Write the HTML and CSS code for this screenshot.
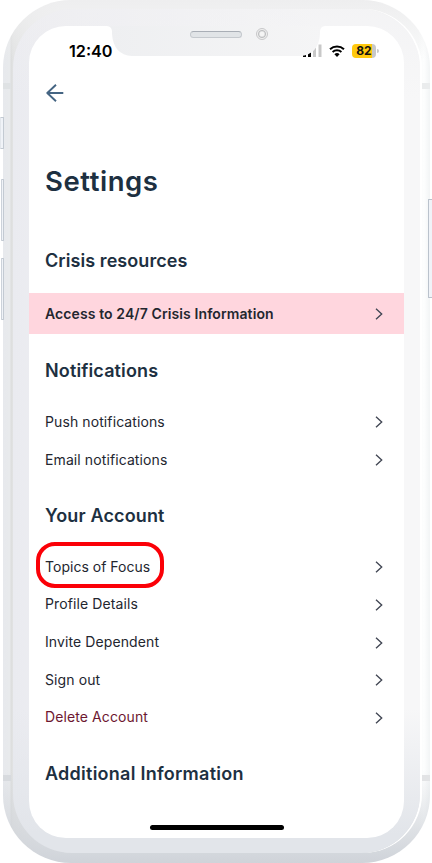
FILE: index.html
```html
<!DOCTYPE html>
<html lang="en">
<head>
    <meta charset="UTF-8">
    <title>Settings</title>
    <link rel="stylesheet" href="styles.css">
</head>
<body>
<svg class="defs">
    <linearGradient id="notchFill">
        <stop offset="0" stop-color="#eeeff1"/>
        <stop offset="1" stop-color="#f5f5f6"/>
    </linearGradient>
    <symbol id="chevron" viewBox="0 0 8 12">
        <path d="M1 .8 6.7 6 1 11.2" fill="none" stroke="#414653" stroke-width="1.35"/>
    </symbol>
</svg>
<div class="phone">
    <i class="key key-mute"></i>
    <i class="key key-up"></i>
    <i class="key key-down"></i>
    <i class="key key-power"></i>
    <i class="band band-tl"></i>
    <i class="band band-tr"></i>
    <i class="band band-bl"></i>
    <i class="band band-br"></i>
    <div class="bezel">
        <div class="screen">
            <div class="status">
                <span class="time">12:40</span>
                <div class="status-icons">
                    <svg width="19" height="13" viewBox="0 0 19 13">
                        <path d="M0 9h3v4H0zM5 7h3v6H5z" fill="#000"/>
                        <path d="M10 3.5h3V13h-3zM15.5.5h3V13h-3z" fill="#c8c8c8"/>
                    </svg>
                    <svg class="wifi" width="16" height="12" viewBox="0 0 16 12">
                        <path d="M1 4.2a10.3 10.3 0 0 1 14 0M3.6 7a6.5 6.5 0 0 1 8.8 0" fill="none" stroke="#000" stroke-width="2"/>
                        <path d="M8 12 5.4 9.3a3.8 3.8 0 0 1 5.2 0z" fill="#000"/>
                    </svg>
                    <span class="battery">82</span>
                    <i class="battery-tip"></i>
                </div>
            </div>
            <div class="back">
                <svg width="18" height="18" viewBox="0 0 18 18">
                    <path d="M17.3 9H1.4M10 .8 1.3 9l8.7 8.2" fill="none" stroke="#456583" stroke-width="1.9" stroke-linejoin="round"/>
                </svg>
            </div>
            <h1>Settings</h1>
            <h2 class="t-crisis">Crisis resources</h2>
            <div class="row crisis"><span>Access to 24/7 Crisis Information</span><svg class="chev"><use href="#chevron"/></svg></div>
            <h2>Notifications</h2>
            <div class="list">
                <div class="row"><span>Push notifications</span><svg class="chev"><use href="#chevron"/></svg></div>
                <div class="row"><span>Email notifications</span><svg class="chev"><use href="#chevron"/></svg></div>
            </div>
            <h2>Your Account</h2>
            <div class="list">
                <div class="row topics"><span>Topics of Focus</span><svg class="chev"><use href="#chevron"/></svg><i class="mark"></i></div>
                <div class="row"><span>Profile Details</span><svg class="chev"><use href="#chevron"/></svg></div>
                <div class="row"><span>Invite Dependent</span><svg class="chev"><use href="#chevron"/></svg></div>
                <div class="row"><span>Sign out</span><svg class="chev"><use href="#chevron"/></svg></div>
                <div class="row delete"><span>Delete Account</span><svg class="chev"><use href="#chevron"/></svg></div>
            </div>
            <h2 class="t-info">Additional Information</h2>
            <svg class="notch" width="218" height="30" viewBox="0 0 218 30">
                <path d="M0 0Q4.500 .5 5 5v3Q6.500 29 25 30H193Q211.500 29 213 8V5Q213.500 .5 218 0z" fill="url(#notchFill)"/>
            </svg>
            <i class="home"></i>
        </div>
    </div>
    <i class="speaker"></i>
    <i class="camera"></i>
</div>
</body>
</html>
```

FILE: styles.css
```css
* {
    padding: 0;
    margin: 0;
    box-sizing: border-box;
}

body {
    width: 432px;
    height: 863px;
    overflow: hidden;
    background: #fff;
    font-family: Inter, "Liberation Sans", sans-serif;
}

.defs {
    position: absolute;
    width: 0;
    height: 0;
}

/* phone body */
.phone {
    position: relative;
    width: 427px;
    height: 863px;
    margin-left: 3px;
    padding: 9px 10px 10px;
    border-radius: 68px;
    background: linear-gradient(180deg, #eeeeef 0, rgba(240, 240, 240, 0) 60px, rgba(215, 219, 225, 0) 770px, #cfd3d9 863px), linear-gradient(90deg, #e7e9ed 0, #e8eaec 7px, #dcdddd 8px, #e2e3e3 10px, #f7f8f8 60px, #f9fafa 415px, #fdfefe 421px, #f2f4f5 427px);
}

.bezel {
    height: 844px;
    padding: 17px 16px 15px;
    border-radius: 59px;
    background: linear-gradient(180deg, rgba(240, 240, 242, .5) 0, rgba(247, 247, 248, 0) 90px, rgba(226, 229, 235, 0) 700px, #e2e5ea 825px), linear-gradient(90deg, #eaebf0, #ededf1 35px, #f7f7f8 300px);
    box-shadow: 2px 0 0 #fff;
}

.screen {
    position: relative;
    width: 375px;
    height: 812px;
    border-radius: 37px;
    background: #fff;
    overflow: hidden;
}

.key {
    position: absolute;
    left: -3px;
    width: 4px;
    border: 1px solid #c3cad2;
    border-left-color: #e3e7ec;
    border-radius: 1px;
    background: #f0f3f8;
}

.key-mute {
    top: 117px;
    height: 32px;
}

.key-up {
    top: 179px;
    left: -2px;
    width: 3px;
    height: 62px;
    border-left-color: #ccd2da;
}

.key-down {
    top: 258px;
    left: -2px;
    width: 3px;
    height: 62px;
    border-left-color: #ccd2da;
}

.key-power {
    top: 199px;
    left: 425px;
    width: 5px;
    height: 99px;
    border-color: #bac2cc;
    border-right: 0;
}

.band {
    position: absolute;
    width: 8px;
    height: 6px;
    background: #dfe2e4;
}

.band-tl {
    top: 83px;
    left: 0;
}

.band-tr {
    top: 83px;
    right: 0;
    background: #eaeced;
}

.band-bl {
    top: 775px;
    left: 0;
    background: #d7dade;
}

.band-br {
    top: 775px;
    right: 0;
    background: #e2e3e5;
}

/* status bar */
.status {
    display: flex;
    justify-content: space-between;
    align-items: center;
    height: 48px;
    padding: 1px 25px 0 40px;
}

.time {
    font-size: 16.2px;
    font-weight: 600;
    color: #000;
}

.status-icons {
    display: flex;
    align-items: center;
}

.wifi {
    margin: 0 7px 0 7px;
}

.battery {
    width: 24px;
    height: 14px;
    border-radius: 4px;
    background: linear-gradient(90deg, #ffc90e 20px, #c8c8c8 20px);
    font-size: 12px;
    font-weight: 700;
    line-height: 14px;
    text-align: center;
    color: #111;
}

.battery-tip {
    width: 2px;
    height: 4px;
    margin-left: 1px;
    border-radius: 0 2px 2px 0;
    background: #c8c8c8;
}

.back {
    display: flex;
    align-items: center;
    height: 38px;
    padding-left: 17px;
}

/* content */
h1 {
    margin-top: 49px;
    padding-left: 16px;
    font-size: 27.5px;
    font-weight: 600;
    line-height: 40px;
    letter-spacing: .55px;
    color: #1d3041;
}

h2 {
    margin-top: 25px;
    padding-left: 16px;
    font-size: 18px;
    font-weight: 600;
    line-height: 24px;
    letter-spacing: .14px;
    color: #1d3041;
}

.t-crisis {
    margin-top: 48px;
    letter-spacing: .07px;
}

.t-info {
    letter-spacing: .26px;
}

.list {
    margin-top: 20.7px;
}

.row {
    position: relative;
    display: flex;
    align-items: center;
    justify-content: space-between;
    height: 37.6px;
    padding: 0 21px 0 16px;
    font-size: 14px;
    letter-spacing: .1px;
    color: #23262f;
}

.list .row span {
    padding-bottom: 2px;
}

.topics {
    letter-spacing: .02px;
}

.crisis {
    height: 41px;
    margin-top: 20px;
    background: #ffd6de;
    font-weight: 600;
}

.delete {
    color: #6d1730;
}

.chev {
    width: 8px;
    height: 12px;
}

.mark {
    position: absolute;
    left: 7px;
    top: -7px;
    width: 128px;
    height: 46px;
    border: 4px solid #fb0007;
    border-radius: 19px;
}

/* things lying over the screen */
.notch {
    position: absolute;
    top: 0;
    left: 78px;
}

.home {
    position: absolute;
    left: 121px;
    bottom: 8px;
    width: 134px;
    height: 5px;
    border-radius: 3px;
    background: #000;
}

.speaker {
    position: absolute;
    top: 31px;
    left: 187px;
    width: 52px;
    height: 7px;
    border: 1px solid #c5c9ce;
    border-top-color: #a9aeb6;
    border-radius: 4px;
    background: #e1e4e7;
}

.camera {
    position: absolute;
    top: 28px;
    left: 253px;
    width: 12px;
    height: 12px;
    border: 1px solid #c8c8ca;
    border-radius: 50%;
    background: radial-gradient(#f5f5f5 2px, #bfc0c2 3.5px, #f0f0f0 4.5px);
}
```
